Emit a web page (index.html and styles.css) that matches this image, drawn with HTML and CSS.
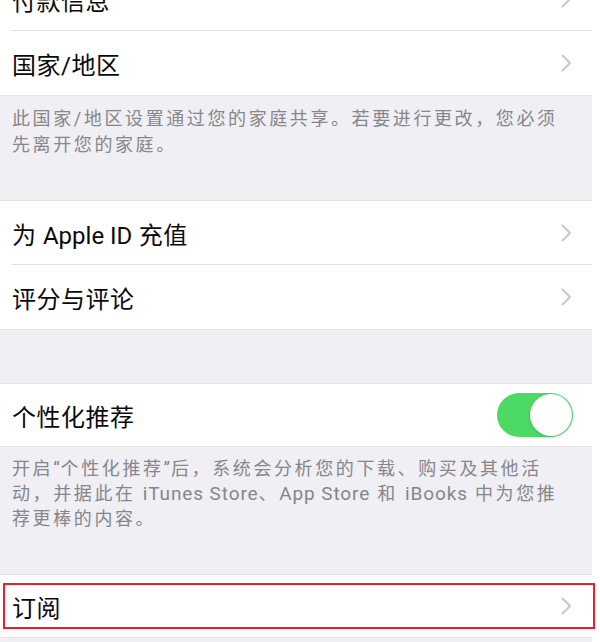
FILE: index.html
```html
<!DOCTYPE html>
<html lang="zh-CN">
<head>
<meta charset="utf-8">
<title>设置</title>
<link rel="stylesheet" href="styles.css">
</head>
<body>
<div class="screen">
  <div class="group">
    <div class="row first sep"><span class="label">付款信息</span><svg class="chev" viewBox="0 0 11 18"><path d="M1.5 1.5 L9 9 L1.5 16.5"/></svg></div>
    <div class="row"><span class="label">国家/地区</span><svg class="chev" viewBox="0 0 11 18"><path d="M1.5 1.5 L9 9 L1.5 16.5"/></svg></div>
  </div>
  <div class="footer f1">此国家/地区设置通过您的家庭共享。若要进行更改，您必须<br>先离开您的家庭。</div>

  <div class="group">
    <div class="row sep"><span class="label">为 <span class="latin">Apple ID</span> 充值</span><svg class="chev" viewBox="0 0 11 18"><path d="M1.5 1.5 L9 9 L1.5 16.5"/></svg></div>
    <div class="row"><span class="label">评分与评论</span><svg class="chev" viewBox="0 0 11 18"><path d="M1.5 1.5 L9 9 L1.5 16.5"/></svg></div>
  </div>
  <div class="spacer"></div>

  <div class="group">
    <div class="row r63"><span class="label">个性化推荐</span><span class="toggle"><span class="knob"></span></span></div>
  </div>
  <div class="footer f2">开启<span class="quote">“</span>个性化推荐<span class="quote">”</span>后，系统会分析您的下载、购买及其他活<br>动，并据此在 <span class="latin">iTunes Store</span>、<span class="latin">App Store</span> 和 <span class="latin">iBooks</span> 中为您推<br>荐更棒的内容。</div>

  <div class="group">
    <div class="row r63 marked"><span class="label">订阅</span><svg class="chev" viewBox="0 0 11 18"><path d="M1.5 1.5 L9 9 L1.5 16.5"/></svg><span class="highlight"></span></div>
  </div>
  <div class="tail"></div>
</div>
</body>
</html>
```

FILE: styles.css
```css
html, body {
  margin: 0;
  padding: 0;
  background: #ffffff;
  overflow: hidden;
}

.screen {
  width: 592px;
  margin-top: -34px;
  background: #efeff4;
  font-family: "Roboto", "Noto Sans CJK SC", sans-serif;
}

.group {
  background: #ffffff;
  border-top: 1px solid #e2e2e7;
  border-bottom: 1px solid #e2e2e7;
}

.row {
  position: relative;
  height: 64px;
  display: flex;
  align-items: center;
  justify-content: space-between;
  padding: 0 20px 0 12px;
  box-sizing: border-box;
}

.row.r63 {
  height: 62px;
}

.row.sep::after {
  content: "";
  position: absolute;
  left: 11px;
  right: 0;
  bottom: 0;
  height: 1px;
  background: #e0e0e5;
}

.label {
  font-size: 24px;
  letter-spacing: 0.5px;
  color: #0a0a0a;
  white-space: nowrap;
}

.label .latin {
  letter-spacing: 0;
}

.chev {
  width: 11px;
  height: 18px;
  fill: none;
  stroke: #c7c7cc;
  stroke-width: 2;
  stroke-linecap: round;
  stroke-linejoin: round;
}

.footer {
  font-size: 18px;
  letter-spacing: 2.6px;
  color: #86868b;
  white-space: nowrap;
  padding-left: 12px;
}

.footer .latin {
  font-size: 19px;
  letter-spacing: 0.9px;
}

.footer .quote {
  letter-spacing: 1px;
}

.f1 {
  line-height: 26px;
  padding-top: 10px;
  padding-bottom: 42px;
}

.f2 {
  line-height: 25px;
  padding-top: 9px;
  padding-bottom: 43px;
}

.spacer {
  height: 53px;
}

.tail {
  height: 20px;
}

.toggle {
  position: relative;
  width: 76px;
  height: 44px;
  border-radius: 22px;
  background: #4cd964;
  flex: none;
  margin-right: -1px;
}

.knob {
  position: absolute;
  right: 1px;
  top: 1px;
  width: 42px;
  height: 42px;
  border-radius: 50%;
  background: #ffffff;
  box-shadow: 0 1px 3px rgba(0, 0, 0, 0.18);
}

.highlight {
  position: absolute;
  left: 3px;
  right: -3px;
  top: 8px;
  bottom: 8px;
  border: 2px solid #e5222b;
  pointer-events: none;
}
```
